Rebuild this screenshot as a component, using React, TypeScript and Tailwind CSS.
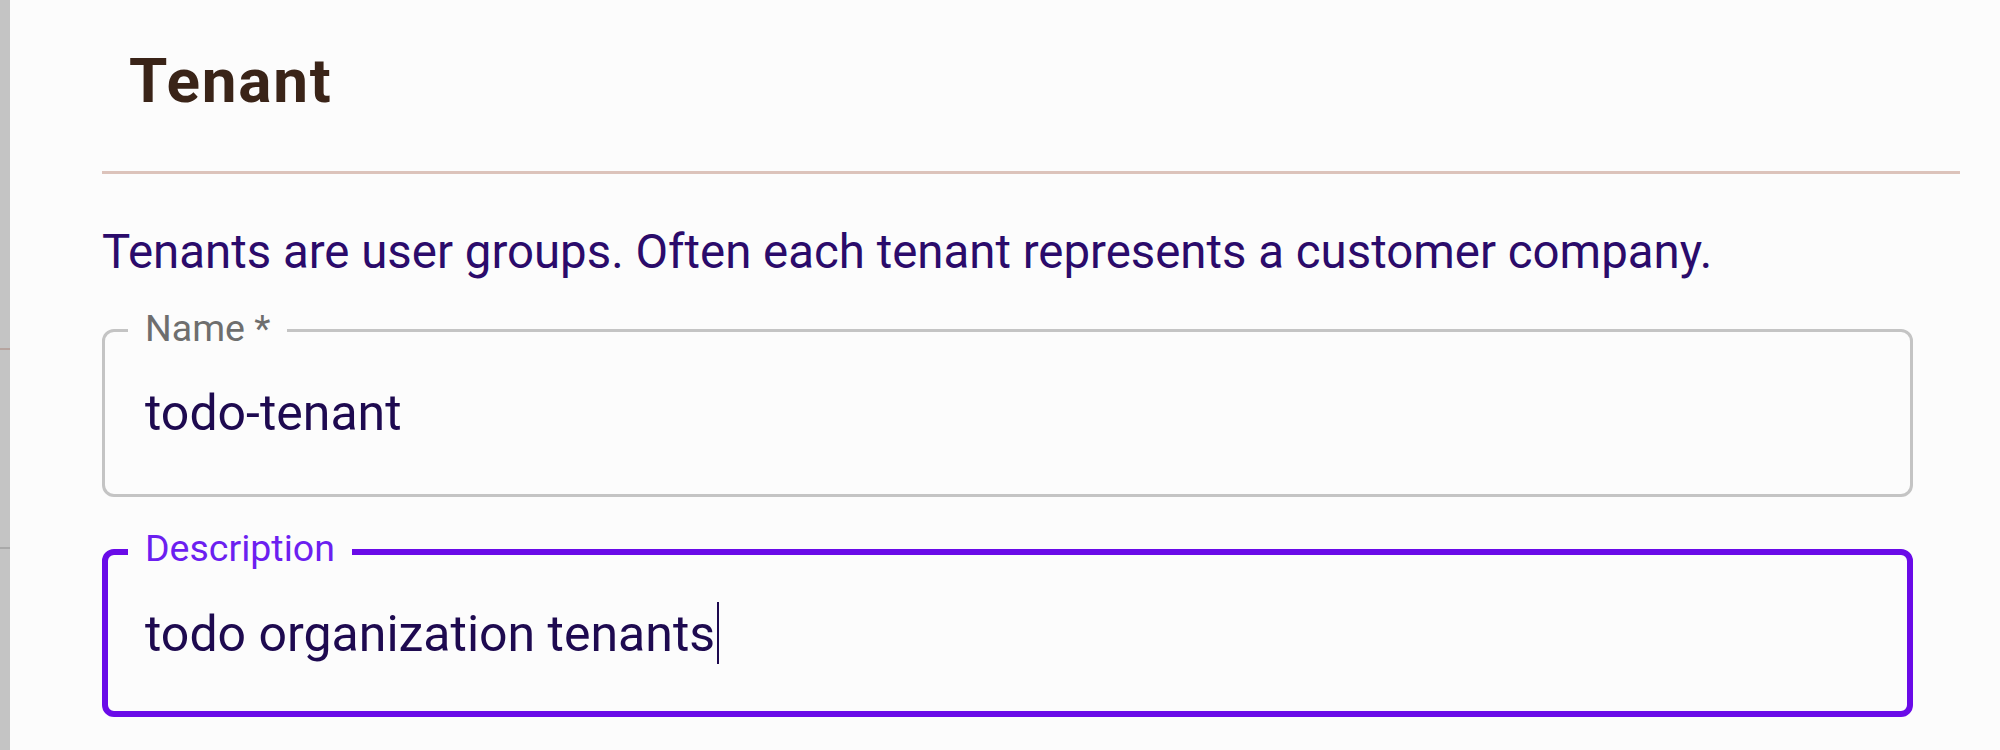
const fontFamily = { fontFamily: 'Roboto, "Liberation Sans", sans-serif' };

type FieldProps = {
  label: string;
  value: string;
  focused?: boolean;
};

function OutlinedField({ label, value, focused }: FieldProps) {
  return (
    <div
      className={
        focused
          ? 'relative h-[168px] w-[1811px] rounded-[12px] border-[6px] border-[#6a0be8] pl-[37px] pt-[52px]'
          : 'relative h-[168px] w-[1811px] rounded-[12px] border-[3px] border-[#c4c4c4] pl-[40px] pt-[54px]'
      }
    >
      <span
        className={
          focused
            ? 'absolute left-[20px] top-[-26px] bg-[#fcfcfc] px-[17px] text-[37.5px] leading-[38px] text-[#6c1ff0]'
            : 'absolute left-[23px] top-[-23px] bg-[#fcfcfc] px-[17px] text-[37.5px] leading-[38px] text-[#6e6e6e]'
        }
      >
        {label}
      </span>
      <div className="flex items-start text-[50px] leading-[54px] text-[#1e0a50]">
        <span>{value}</span>
        {focused && <span className="ml-[2px] mt-[-5px] h-[62px] w-[2px] bg-[#1e0a50]" />}
      </div>
    </div>
  );
}

export default function App() {
  return (
    <div className="flex h-[750px] w-[2000px] overflow-hidden bg-[#fcfcfc]" style={fontFamily}>
      <div className="flex w-[10px] flex-col bg-[#c4c4c4]">
        <div className="h-[348px]" />
        <div className="h-[2px] bg-[#b6a49f]" />
        <div className="h-[197px]" />
        <div className="h-[2px] bg-[#a9a9a9]" />
      </div>

      <div className="flex flex-col pl-[92px]">
        <h2 className="pl-[27px] pt-[33px] text-[62px] font-bold leading-[96px] tracking-[1.8px] text-[#3a2418]">
          Tenant
        </h2>
        <div className="mt-[42px] h-[3px] w-[1858px] bg-[#dcc3bb]" />
        <p className="mt-[45px] text-[47.4px] leading-[67px] text-[#2b0b6b]">
          Tenants are user groups. Often each tenant represents a customer company.
        </p>
        <div className="mt-[43px] flex flex-col gap-[52px]">
          <OutlinedField label="Name *" value="todo-tenant" />
          <OutlinedField label="Description" value="todo organization tenants" focused />
        </div>
      </div>
    </div>
  );
}
